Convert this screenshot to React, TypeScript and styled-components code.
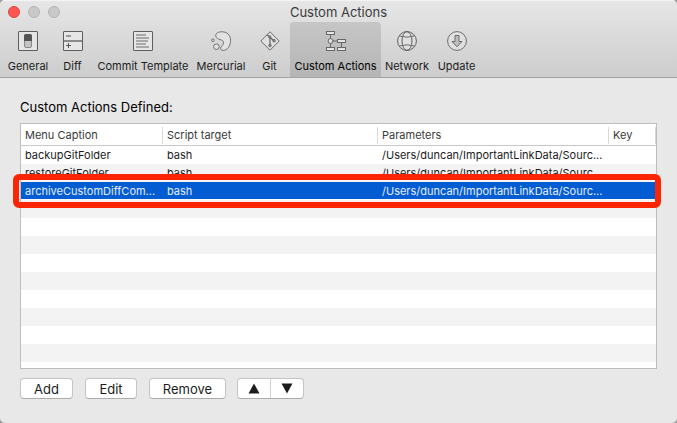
import React, { useState } from "react";
import styled, { createGlobalStyle, css } from "styled-components";

const GlobalStyle = createGlobalStyle`
  *, *::before, *::after { box-sizing: border-box; }
  body {
    margin: 0;
    background: #9c9c9c;
    font-family: Inter, "Liberation Sans", sans-serif;
    font-size: 11px;
    color: #1c1c1c;
  }
  button { font: inherit; color: inherit; }
`;

const Window = styled.div`
  display: flex;
  flex-direction: column;
  min-height: 100vh;
  background: #e8e8e8;
  border-radius: 5px;
  overflow: hidden;
`;

const Chrome = styled.header`
  background: linear-gradient(#e6e6e6, #cdcdcd);
  border-top: 1px solid #f4f4f4;
  border-bottom: 1px solid #a3a3a3;
`;

const TitleBar = styled.div`
  display: grid;
  grid-template-columns: 1fr auto 1fr;
  align-items: center;
  height: 21px;
  padding: 0 8px;
`;

const Lights = styled.div`
  display: flex;
  gap: 8px;
`;

const Light = styled.button<{ $close?: boolean }>`
  width: 12px;
  height: 12px;
  padding: 0;
  border-radius: 50%;
  border: 1px solid ${(p) => (p.$close ? "#e2443f" : "#b4b4b4")};
  background: ${(p) => (p.$close ? "#fc5652" : "#c9c9c9")};
`;

const Title = styled.h1`
  margin: 0;
  font-size: 13px;
  line-height: 20px;
  font-weight: 400;
  color: #3a3a3a;
`;

const Toolbar = styled.nav`
  display: grid;
  grid-template-columns: 48px 41px 100px 56px 41px 91px 52px 47px;
  padding-left: 4px;
`;

const Tab = styled.button<{ $active: boolean }>`
  display: flex;
  flex-direction: column;
  align-items: center;
  gap: 7px;
  height: 55px;
  padding: 9px 0 0;
  border: 0;
  border-radius: 4px 4px 0 0;
  background: none;
  line-height: 16px;
  white-space: nowrap;
  ${(p) =>
    p.$active &&
    css`
      background: linear-gradient(#c6c6c6, #b5b5b5);
      color: #000;
    `}
`;

const Icon = styled.svg`
  display: block;
  flex: none;
  width: 20px;
  height: 20px;
  fill: none;
  stroke: #5e5e5e;
`;

const Content = styled.main`
  flex: 1;
  display: flex;
  flex-direction: column;
  padding: 20px 20px 24px;
`;

const Heading = styled.h2`
  margin: 0 0 7px;
  font-size: 13px;
  line-height: 18px;
  font-weight: 400;
  color: #000;
`;

const TablePanel = styled.div`
  flex: 1;
  border: 1px solid #bdbdbd;
  background: repeating-linear-gradient(#fff 0 18px, #f3f3f3 18px 36px) 0 22px #fff;
`;

const Table = styled.table`
  width: 100%;
  table-layout: fixed;
  border-collapse: collapse;
`;

const Col = styled.col<{ $width?: number }>`
  width: ${(p) => (p.$width ? `${p.$width}px` : "auto")};
`;

const HeadRow = styled.tr`
  height: 22px;
  background: #fff;
  box-shadow: inset 0 -1px #c8c8c8;
`;

const Th = styled.th`
  padding: 0 0 0 4px;
  text-align: left;
  font-weight: 400;
  line-height: 16px;
  color: #3a3a3a;
  background: linear-gradient(#d9d9d9, #d9d9d9) right 0 top 3px / 1px 17px no-repeat;
`;

const Row = styled.tr<{ $selected: boolean }>`
  position: relative;
  height: 18px;
  ${(p) =>
    p.$selected &&
    css`
      color: #e3edfb;
      background: linear-gradient(#035cd2 0 17px, #fff 17px);
    `}
`;

const Td = styled.td`
  padding: 0 0 0 4px;
  line-height: 18px;
  white-space: nowrap;
`;

const Callout = styled.span`
  position: absolute;
  inset: -8px -5px -8px -8px;
  border: 6px solid #fb2403;
  border-radius: 6px;
  pointer-events: none;
`;

const Actions = styled.div`
  display: flex;
  margin-top: 9px;
`;

const PushButton = styled.button<{ $width: number; $gap: number }>`
  width: ${(p) => p.$width}px;
  height: 21px;
  margin-right: ${(p) => p.$gap}px;
  padding: 0;
  border: 1px solid #c4c4c4;
  border-bottom-color: #acacac;
  border-radius: 4px;
  background: #fff;
  font-size: 13px;
  line-height: 18px;
`;

const Segmented = styled.div`
  display: flex;
  height: 21px;
  border: 1px solid #c4c4c4;
  border-bottom-color: #acacac;
  border-radius: 4px;
  background: #fff;
`;

const Segment = styled.button`
  display: grid;
  place-items: center;
  width: 32px;
  padding: 0;
  border: 0;
  background: none;
  & + & {
    width: 33px;
    border-left: 1px solid #d2d2d2;
  }
`;

const Arrow = styled.svg`
  width: 12px;
  height: 11px;
  fill: #1c1c1c;
`;

const icons: Record<string, React.ReactNode> = {
  General: (
    <>
      <rect x="0.5" y="0.5" width="19" height="19" rx="0.5" fill="#e6e6e6" />
      <rect x="6.5" y="3.5" width="7" height="13" rx="1.5" fill="#c4c4c4" stroke="#888" />
      <path d="M6 10V5q0-2 2-2h4q2 0 2 2v5z" fill="#555" stroke="none" />
    </>
  ),
  Diff: (
    <>
      <rect x="0.5" y="0.5" width="19" height="19" rx="0.5" fill="#e6e6e6" />
      <path d="M1 10h18" stroke="#8a8a8a" strokeWidth="2" />
      <path d="M3 5h5" stroke="#999" strokeWidth="2" />
      <path d="M3 14.5h5M5.5 12v5" stroke="#555" />
    </>
  ),
  "Commit Template": (
    <>
      <rect x="0.5" y="0.5" width="19" height="19" rx="0.5" fill="#e6e6e6" />
      <path d="M3 4h10M3 7h13M3 10h12M3 13h10M3 16h13" stroke="#949494" strokeWidth="1.6" />
    </>
  ),
  Mercurial: (
    <g fill="#e2e2e2" stroke="#707070">
      <path d="M4.800 5C4.300 2.300 7.200.8 11 .8c5 0 8.600 3.400 8.600 8.400 0 5.800-3.400 10.200-7.400 10.200-2 0-2.900-1.200-2.500-2.600.5-1.700 2.800-2.700 2.800-5 0-1.900-1.300-2.600-3.300-3.200C7 8 5.200 7.200 4.800 5z" />
      <circle cx="5.400" cy="15.700" r="2.800" />
      <circle cx="1.900" cy="9.300" r="1.300" />
    </g>
  ),
  Git: (
    <>
      <path d="M10 .8L19.200 10 10 19.200.8 10z" fill="#e0e0e0" stroke="#6c6c6c" strokeLinejoin="round" />
      <path d="M7 3.500L13.500 9.500M10 6.500V14" stroke="#666" strokeWidth="1.200" />
      <g fill="#888" stroke="#666" strokeWidth="0.800">
        <circle cx="9.800" cy="6" r="1.200" />
        <circle cx="14" cy="9.700" r="1.300" />
        <circle cx="10" cy="14.500" r="1.300" />
      </g>
    </>
  ),
  "Custom Actions": (
    <g fill="#e4e4e4" stroke="#686868">
      <path d="M4.500 4v12M4.500 10h7M15.500 12v4" />
      <rect x="0.500" y="0.500" width="8" height="3" />
      <rect x="11.500" y="8.500" width="8" height="3" />
      <rect x="0.500" y="16.500" width="8" height="3" />
      <rect x="11.500" y="16.500" width="8" height="3" />
      <circle cx="4.500" cy="10" r="2.400" />
    </g>
  ),
  Network: (
    <>
      <circle cx="10" cy="10" r="9.400" fill="#e0e0e0" />
      <ellipse cx="10" cy="10" rx="5" ry="9.400" />
      <path d="M2.400 5q7.600 2.400 15.200 0M2.400 15q7.600-2.400 15.200 0" stroke="#6c6c6c" />
    </>
  ),
  Update: (
    <>
      <circle cx="10" cy="10" r="9.400" fill="#e0e0e0" stroke="#6c6c6c" />
      <path d="M8 4.500h4v6h3l-5 5.300-5-5.300h3z" fill="#bdbdbd" stroke="#6c6c6c" />
    </>
  ),
};

const columns = [
  { label: "Menu Caption", width: 142 },
  { label: "Script target", width: 215 },
  { label: "Parameters" },
  { label: "Key", width: 47 },
];

const rows = [
  { caption: "backupGitFolder", target: "bash", params: "/Users/duncan/ImportantLinkData/Sourc..." },
  { caption: "restoreGitFolder", target: "bash", params: "/Users/duncan/ImportantLinkData/Sourc..." },
  { caption: "archiveCustomDiffCom...", target: "bash", params: "/Users/duncan/ImportantLinkData/Sourc..." },
];

export default function App() {
  const [tab, setTab] = useState("Custom Actions");
  const [selected, setSelected] = useState(2);

  return (
    <>
      <GlobalStyle />
      <Window>
        <Chrome>
          <TitleBar>
            <Lights>
              <Light $close aria-label="Close" />
              <Light aria-label="Minimize" />
              <Light aria-label="Zoom" />
            </Lights>
            <Title>{tab}</Title>
          </TitleBar>
          <Toolbar>
            {Object.keys(icons).map((name) => (
              <Tab key={name} $active={name === tab} onClick={() => setTab(name)}>
                <Icon viewBox="0 0 20 20" aria-hidden="true">
                  {icons[name]}
                </Icon>
                {name}
              </Tab>
            ))}
          </Toolbar>
        </Chrome>
        <Content>
          <Heading id="actions-heading">Custom Actions Defined:</Heading>
          <TablePanel>
            <Table aria-labelledby="actions-heading">
              <colgroup>
                {columns.map((c) => (
                  <Col key={c.label} $width={c.width} />
                ))}
              </colgroup>
              <thead>
                <HeadRow>
                  {columns.map((c) => (
                    <Th key={c.label} scope="col">
                      {c.label}
                    </Th>
                  ))}
                </HeadRow>
              </thead>
              <tbody>
                {rows.map((r, i) => (
                  <Row key={r.caption} $selected={i === selected} onClick={() => setSelected(i)}>
                    <Td>
                      {r.caption}
                      {i === selected && <Callout />}
                    </Td>
                    <Td>{r.target}</Td>
                    <Td>{r.params}</Td>
                    <Td />
                  </Row>
                ))}
              </tbody>
            </Table>
          </TablePanel>
          <Actions>
            <PushButton $width={53} $gap={12}>Add</PushButton>
            <PushButton $width={52} $gap={12}>Edit</PushButton>
            <PushButton $width={77} $gap={11}>Remove</PushButton>
            <Segmented>
              <Segment aria-label="Move up">
                <Arrow viewBox="0 0 12 11" aria-hidden="true">
                  <path d="M6 .5L11.500 10.500H.5z" />
                </Arrow>
              </Segment>
              <Segment aria-label="Move down">
                <Arrow viewBox="0 0 12 11" aria-hidden="true">
                  <path d="M.5.5h11L6 10.500z" />
                </Arrow>
              </Segment>
            </Segmented>
          </Actions>
        </Content>
      </Window>
    </>
  );
}
